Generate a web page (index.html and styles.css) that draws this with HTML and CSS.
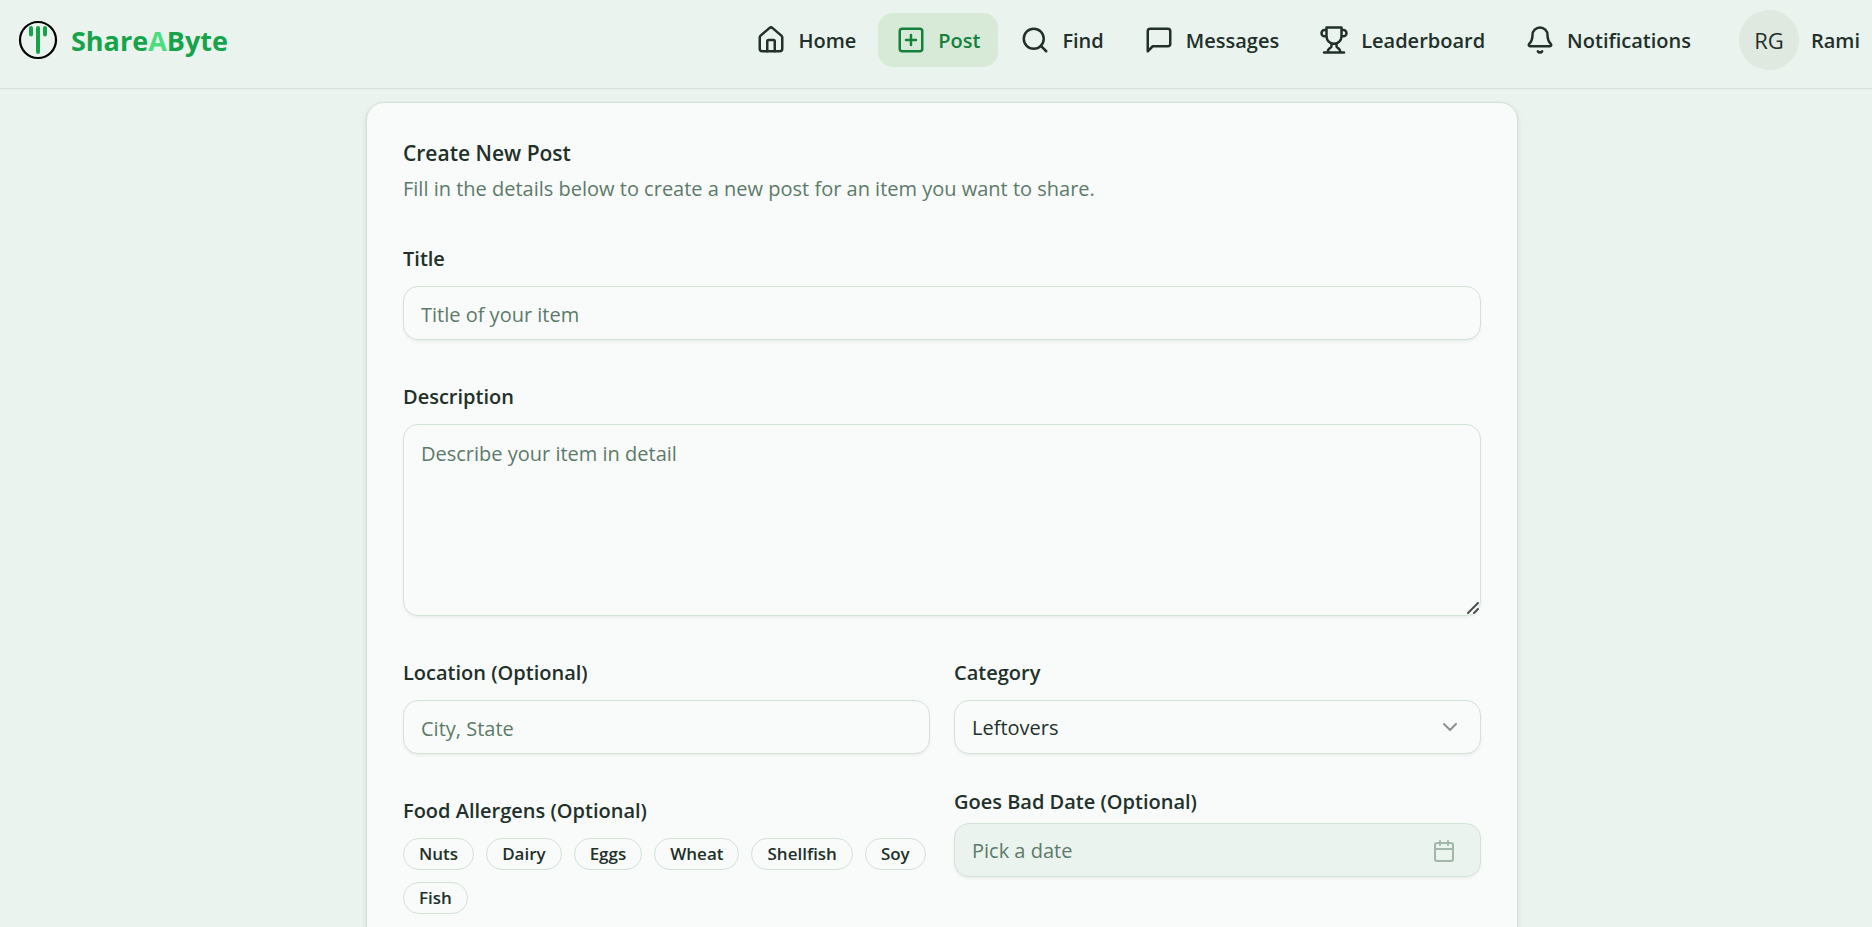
FILE: index.html
```html
<!DOCTYPE html>
<html lang="en">
<head>
<meta charset="utf-8">
<title>ShareAByte</title>
<link rel="stylesheet" href="styles.css">
</head>
<body>
<header class="header">
  <a class="brand" href="#">
    <svg class="brand-mark" viewBox="0 0 40 40" fill="none" stroke-linecap="round">
      <circle cx="20" cy="20" r="18" stroke="#000" stroke-width="2.200"/>
      <path d="M13 8v6.500M20 8v24M27 8v6.500" stroke="#16a34a" stroke-width="4"/>
    </svg>
    <span class="brand-name">Share<span class="brand-accent">A</span>Byte</span>
  </a>
  <nav class="nav">
    <a class="nav-link" href="#">
      <svg class="icon" viewBox="0 0 24 24"><path d="M15 21v-8a1 1 0 0 0-1-1h-4a1 1 0 0 0-1 1v8"/><path d="M3 10a2 2 0 0 1 .709-1.528l7-5.999a2 2 0 0 1 2.582 0l7 5.999A2 2 0 0 1 21 10v9a2 2 0 0 1-2 2H5a2 2 0 0 1-2-2z"/></svg>
      <span class="nav-text">Home</span>
    </a>
    <a class="nav-link nav-link-active" href="#">
      <svg class="icon" viewBox="0 0 24 24"><rect width="18" height="18" x="3" y="3" rx="2"/><path d="M8 12h8M12 8v8"/></svg>
      <span class="nav-text">Post</span>
    </a>
    <a class="nav-link" href="#">
      <svg class="icon" viewBox="0 0 24 24"><circle cx="11" cy="11" r="8"/><path d="m21 21-4.300-4.300"/></svg>
      <span class="nav-text">Find</span>
    </a>
    <a class="nav-link" href="#">
      <svg class="icon" viewBox="0 0 24 24"><path d="M21 15a2 2 0 0 1-2 2H7l-4 4V5a2 2 0 0 1 2-2h14a2 2 0 0 1 2 2z"/></svg>
      <span class="nav-text">Messages</span>
    </a>
    <a class="nav-link" href="#">
      <svg class="icon" viewBox="0 0 24 24"><path d="M6 9H4.500a2.500 2.500 0 0 1 0-5H6M18 9h1.500a2.500 2.500 0 0 0 0-5H18M4 22h16M10 14.660V17c0 .550-.470.980-.970 1.210C7.850 18.750 7 20.240 7 22M14 14.660V17c0 .550.470.980.970 1.210C16.150 18.750 17 20.240 17 22M18 2H6v7a6 6 0 0 0 12 0V2Z"/></svg>
      <span class="nav-text">Leaderboard</span>
    </a>
    <a class="nav-link" href="#">
      <svg class="icon" viewBox="0 0 24 24"><path d="M10.268 21a2 2 0 0 0 3.464 0"/><path d="M3.262 15.326A1 1 0 0 0 4 17h16a1 1 0 0 0 .740-1.673C19.410 13.956 18 12.499 18 8A6 6 0 0 0 6 8c0 4.499-1.411 5.956-2.738 7.326"/></svg>
      <span class="nav-text">Notifications</span>
    </a>
    <a class="account" href="#">
      <span class="avatar">RG</span>
      <span class="nav-text">Rami</span>
    </a>
  </nav>
</header>
<main class="page">
  <form class="card">
    <div class="card-header">
      <h1 class="card-title">Create New Post</h1>
      <p class="card-text">Fill in the details below to create a new post for an item you want to share.</p>
    </div>
    <div class="field">
      <label class="label" for="title">Title</label>
      <input class="control" id="title" type="text" placeholder="Title of your item">
    </div>
    <div class="field">
      <label class="label" for="description">Description</label>
      <div class="area-wrap">
        <textarea class="control control-area" id="description" placeholder="Describe your item in detail"></textarea>
        <svg class="grip" viewBox="0 0 12 12"><path d="M1 11 11 1M7 11l4-4"/></svg>
      </div>
    </div>
    <div class="row">
      <div class="field">
        <label class="label" for="location">Location (Optional)</label>
        <input class="control" id="location" type="text" placeholder="City, State">
      </div>
      <div class="field">
        <label class="label" for="category">Category</label>
        <div class="select-wrap">
          <select class="control" id="category"><option>Leftovers</option></select>
          <svg class="chevron" viewBox="0 0 24 24"><path d="m6 9 6 6 6-6"/></svg>
        </div>
      </div>
    </div>
    <div class="row">
      <div class="field" role="group" aria-labelledby="allergens">
        <span class="label" id="allergens">Food Allergens (Optional)</span>
        <div class="chips">
          <button class="chip" type="button">Nuts</button>
          <button class="chip" type="button">Dairy</button>
          <button class="chip" type="button">Eggs</button>
          <button class="chip" type="button">Wheat</button>
          <button class="chip" type="button">Shellfish</button>
          <button class="chip" type="button">Soy</button>
          <button class="chip" type="button">Fish</button>
        </div>
      </div>
      <div class="field field-compact">
        <label class="label" for="date">Goes Bad Date (Optional)</label>
        <button class="control control-date" id="date" type="button">
          Pick a date
          <svg class="calendar" viewBox="0 0 24 24"><path d="M8 2v4M16 2v4M3 10h18"/><rect width="18" height="18" x="3" y="4" rx="2"/></svg>
        </button>
      </div>
    </div>
  </form>
</main>
</body>
</html>
```

FILE: styles.css
```css
:root {
  --page: #eaf3ee;
  --surface: #f9fbfa;
  --ink: #22302a;
  --muted: #5c7a69;
  --line: #d2e2d4;
  --shadow: 0 2px 3px rgba(0, 0, 0, 0.05);
}

* {
  box-sizing: border-box;
}

html {
  scrollbar-width: none;
}

body {
  margin: 0;
  background: var(--page);
  color: var(--ink);
  font: 400 20px/30px "Open Sans", "Noto Sans", sans-serif;
}

a {
  color: inherit;
  text-decoration: none;
}

svg {
  flex: none;
}

.icon,
.chevron,
.calendar,
.grip {
  fill: none;
  stroke: currentColor;
  stroke-width: 2;
  stroke-linecap: round;
  stroke-linejoin: round;
}

.icon {
  width: 30px;
  height: 30px;
}

.header {
  display: flex;
  align-items: center;
  justify-content: space-between;
  height: 89px;
  padding: 0 12px 8px 18px;
  border-bottom: 1px solid var(--line);
}

.brand {
  display: flex;
  align-items: center;
  gap: 13px;
}

.brand-mark {
  width: 40px;
  height: 40px;
}

.brand-name {
  padding-top: 2px;
  color: #16a34a;
  font-size: 27px;
  font-weight: 700;
}

.brand-accent {
  color: #4ade80;
}

.nav {
  display: flex;
  align-items: center;
  gap: 4px;
  font-weight: 600;
}

.nav-link {
  display: flex;
  align-items: center;
  gap: 12px;
  height: 54px;
  padding: 0 18px;
  border-radius: 15px;
}

.nav-link-active {
  background: #d7ead8;
  color: #15803d;
}

.nav-text {
  padding-top: 2px;
}

.account {
  display: flex;
  align-items: center;
  gap: 12px;
  margin-left: 26px;
}

.avatar {
  display: grid;
  place-items: center;
  width: 60px;
  height: 60px;
  border-radius: 50%;
  background: #e0e9e0;
  font-size: 22px;
  font-weight: 400;
}

.page {
  padding: 13px 0 36px 12px;
}

.card {
  display: flex;
  flex-direction: column;
  gap: 36px;
  max-width: 1152px;
  margin: 0 auto;
  padding: 36px 36px 96px;
  border: 1px solid var(--line);
  border-radius: 18px;
  background: var(--surface);
  box-shadow: 0 2px 5px rgba(0, 0, 0, 0.1);
}

.card-header {
  display: flex;
  flex-direction: column;
  gap: 8px;
}

.card-title {
  margin: 0;
  font-size: 21px;
  font-weight: 600;
  line-height: 28px;
}

.card-text {
  margin: 0;
  color: var(--muted);
  line-height: 27px;
}

.row {
  display: grid;
  grid-template-columns: 1fr 1fr;
  align-items: start;
  gap: 24px;
}

.field {
  display: flex;
  flex-direction: column;
  gap: 17px;
  padding-top: 10px;
}

.field-compact {
  gap: 11px;
  padding-top: 1px;
}

.label {
  font-weight: 600;
  line-height: 21px;
}

.control {
  display: block;
  width: 100%;
  height: 54px;
  margin: 0;
  padding: 2px 17px 0;
  border: 1px solid var(--line);
  border-radius: 15px;
  background: var(--surface);
  box-shadow: var(--shadow);
  color: var(--ink);
  font: inherit;
  appearance: none;
}

.control::placeholder {
  color: var(--muted);
  opacity: 1;
}

.area-wrap {
  position: relative;
}

.control-area {
  height: 192px;
  padding: 14px 17px;
  resize: vertical;
}

.control-area::-webkit-resizer {
  display: none;
}

.grip {
  position: absolute;
  right: 2px;
  bottom: 2px;
  width: 12px;
  height: 12px;
  color: #4b504d;
  pointer-events: none;
}

.select-wrap {
  position: relative;
}

.chevron {
  position: absolute;
  top: 15px;
  right: 19px;
  width: 24px;
  height: 24px;
  opacity: 0.5;
  pointer-events: none;
}

.control-date {
  display: flex;
  align-items: center;
  justify-content: space-between;
  padding-right: 24px;
  background: var(--page);
  color: var(--muted);
}

.calendar {
  width: 24px;
  height: 24px;
  opacity: 0.5;
}

.chips {
  display: flex;
  flex-wrap: wrap;
  gap: 12px;
}

.chip {
  height: 32px;
  padding: 0 15px;
  border: 1px solid var(--line);
  border-radius: 16px;
  background: none;
  color: var(--ink);
  font: inherit;
  font-size: 17px;
  font-weight: 600;
  line-height: 24px;
}
```
